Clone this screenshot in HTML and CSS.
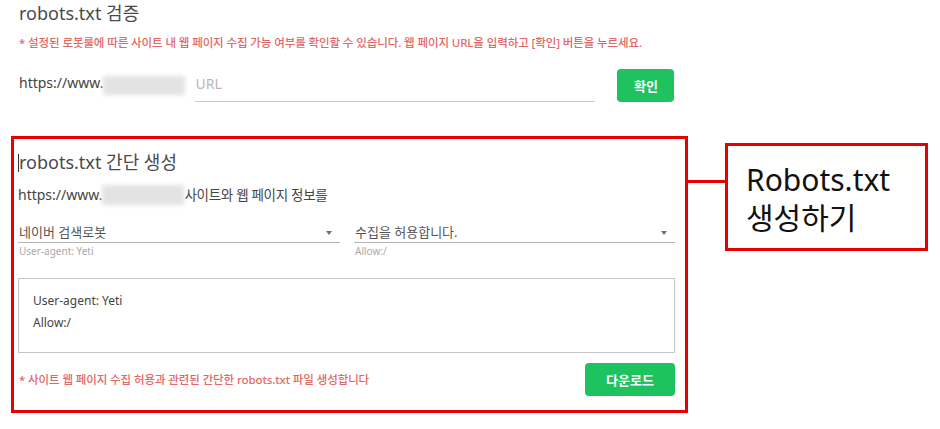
FILE: index.html
```html
<!DOCTYPE html>
<html lang="ko">
<head>
    <meta charset="UTF-8">
    <title>robots.txt 검증</title>
    <link rel="stylesheet" href="styles.css">
</head>
<body>
    <div class="page">
        <section class="check">
            <h2 class="title">robots.txt 검증</h2>
            <p class="notice">* 설정된 로봇룰에 따른 사이트 내 웹 페이지 수집 가능 여부를 확인할 수 있습니다. 웹 페이지 URL을 입력하고 [확인] 버튼을 누르세요.</p>
            <div class="url-row">
                <span class="prefix">https://www.</span>
                <span class="blur"></span>
                <input class="url-input" type="text" placeholder="URL">
                <button class="btn btn-check" type="button">확인</button>
            </div>
        </section>

        <div class="annot-row">
            <section class="gen">
                <h2 class="title"><span class="caret"></span>robots.txt 간단 생성</h2>
                <p class="desc"><span class="prefix">https://www.</span><span class="blur"></span>사이트와 웹 페이지 정보를</p>
                <div class="selects">
                    <div class="field">
                        <div class="select">네이버 검색로봇<span class="arrow"></span></div>
                        <div class="hint">User-agent: Yeti</div>
                    </div>
                    <div class="field">
                        <div class="select">수집을 허용합니다.<span class="arrow"></span></div>
                        <div class="hint">Allow:/</div>
                    </div>
                </div>
                <div class="output">
                    <div>User-agent: Yeti</div>
                    <div>Allow:/</div>
                </div>
                <div class="bottom-row">
                    <p class="notice">* 사이트 웹 페이지 수집 허용과 관련된 간단한 robots.txt 파일 생성합니다</p>
                    <button class="btn btn-download" type="button">다운로드</button>
                </div>
            </section>
            <span class="connector"></span>
            <div class="callout">Robots.txt<br>생성하기</div>
        </div>
    </div>
</body>
</html>
```

FILE: styles.css
```css
body {
    margin: 0;
    background-color: #fff;
    font-family: "Noto Sans", "Noto Sans CJK KR", sans-serif;
    color: #444;
}

.page {
    width: 940px;
    height: 429px;
    overflow: hidden;
}

.check {
    padding: 1px 0 0 19px;
}

.title {
    margin: 0;
    font-size: 18px;
    line-height: 24px;
    font-weight: 400;
    color: #4a4a4a;
}

.notice {
    margin: 10px 0 0;
    font-size: 11.5px;
    line-height: 16px;
    font-weight: 500;
    color: #e26767;
    letter-spacing: -0.1px;
}

.url-row {
    display: flex;
    align-items: flex-end;
    margin-top: 18px;
    height: 33px;
}

.prefix {
    font-size: 14px;
    line-height: 20px;
    color: #444;
}

.url-row .prefix {
    padding-bottom: 9px;
}

.blur {
    display: inline-block;
    width: 82px;
    height: 19px;
    background-color: #e3e3e3;
    filter: blur(2px);
}

.url-row .blur {
    margin-bottom: 7px;
}

.url-input {
    width: 400px;
    height: 20px;
    margin-left: 10px;
    padding: 0 0 7px;
    border: none;
    border-bottom: 1px solid #c9c9c9;
    font-family: inherit;
    font-size: 14px;
    line-height: 20px;
    color: #444;
    outline: none;
}

.url-input::placeholder {
    color: #b8b8b8;
}

.btn {
    height: 33px;
    border: none;
    border-radius: 4px;
    background-color: #1ec35f;
    color: #fff;
    font-family: "Noto Sans CJK KR", sans-serif;
    font-size: 13px;
    font-weight: 700;
    cursor: pointer;
}

.btn-check {
    width: 57px;
    margin-left: 22px;
}

.btn-download {
    width: 90px;
}

.annot-row {
    display: flex;
    align-items: flex-start;
    margin: 34px 0 0 11px;
}

.gen {
    width: 657px;
    height: 260px;
    padding: 11px 10px 0 4px;
    border: 3px solid #e60000;
}

.gen .title {
    padding-left: 1px;
    position: relative;
}

.caret {
    position: absolute;
    left: 0;
    top: 4px;
    width: 1px;
    height: 18px;
    background-color: #333;
}

.desc {
    display: flex;
    align-items: center;
    margin: 11px 0 0;
    font-size: 13.5px;
    line-height: 20px;
    letter-spacing: -0.3px;
}

.desc .prefix {
    font-size: 14px;
    letter-spacing: 0;
}

.desc .blur {
    height: 20px;
}

.selects {
    display: grid;
    grid-template-columns: 322px 321px;
    column-gap: 14px;
    margin-top: 18px;
}

.select {
    display: flex;
    justify-content: space-between;
    align-items: center;
    padding: 0 8px 1px 1px;
    border-bottom: 1px solid #b5b5b5;
    font-size: 13px;
    line-height: 18px;
    color: #555;
}

.arrow {
    width: 0;
    height: 0;
    margin-top: 2px;
    border-left: 3.5px solid transparent;
    border-right: 3.5px solid transparent;
    border-top: 4px solid #6f6f6f;
}

.hint {
    margin-top: 2px;
    padding-left: 1px;
    font-size: 10px;
    line-height: 13px;
    color: #a9a9a9;
}

.output {
    height: 62px;
    margin-top: 20px;
    padding: 11px 14px 0;
    border: 1px solid #c6c6c6;
    font-size: 12px;
    line-height: 22px;
    color: #444;
}

.bottom-row {
    display: flex;
    justify-content: space-between;
    align-items: center;
    margin-top: 10px;
}

.bottom-row .notice {
    margin: 0;
    padding-left: 1px;
}

.connector {
    width: 37px;
    height: 3px;
    margin-top: 44px;
    background-color: #e60000;
}

.callout {
    width: 179px;
    height: 87px;
    margin-top: 7px;
    padding: 15px 0 0 18px;
    border: 3px solid #e60000;
    font-size: 30px;
    line-height: 38px;
    color: #111;
}
```
